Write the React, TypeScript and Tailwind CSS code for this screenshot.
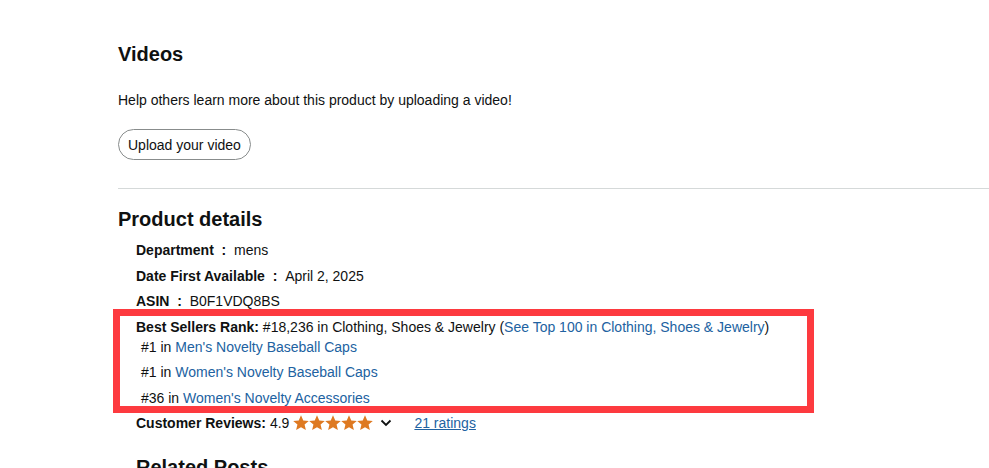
import React from "react";

const FONT = { fontFamily: '"Liberation Sans", Arial, sans-serif' };

function Star() {
  return (
    <svg width="16" height="16" viewBox="1 1.5 22 21" className="inline-block">
      <path
        d="M12 1.5l3.1 7.1 7.6.6-5.8 5 1.8 7.5L12 17.7l-6.7 4 1.8-7.5-5.8-5 7.6-.6z"
        fill="#de7921"
      />
    </svg>
  );
}

function Label({ children }: { children: React.ReactNode }) {
  return <span className="font-bold">{children}</span>;
}

export default function App() {
  const subRanks = [
    { rank: "#1", name: "Men's Novelty Baseball Caps" },
    { rank: "#1", name: "Women's Novelty Baseball Caps" },
    { rank: "#36", name: "Women's Novelty Accessories" },
  ];

  return (
    <div
      className="relative h-[468px] w-[989px] overflow-hidden bg-white text-[#0f1111]"
      style={FONT}
    >
      <div className="pl-[118px] pt-[42px]">
        {/* VIDEOS */}
        <h2 className="text-[20px] font-bold leading-[24px]">Videos</h2>

        <p className="mt-[24px] text-[14px] leading-[20px]">
          Help others learn more about this product by uploading a video!
        </p>

        <button className="mt-[19px] h-[31px] rounded-full border border-[#888c8c] bg-white px-[9px] text-[14px] leading-[20px] text-[#0f1111]">
          Upload your video
        </button>

        <div className="mt-[28px] h-px w-full bg-[#d5d9d9]" />

        {/* PRODUCT DETAILS */}
        <h2 className="mt-[18px] text-[20px] font-bold leading-[24px]">
          Product details
        </h2>

        <ul className="mt-[9px] pl-[18px] text-[14px] leading-[20px]">
          <li className="mb-[5.5px]">
            <Label>Department&nbsp; :&nbsp; </Label>
            <span>mens</span>
          </li>
          <li className="mb-[5.5px]">
            <Label>Date First Available&nbsp; :&nbsp; </Label>
            <span>April 2, 2025</span>
          </li>
          <li className="mb-[5.5px]">
            <Label>ASIN&nbsp; :&nbsp; </Label>
            <span>B0F1VDQ8BS</span>
          </li>
          <li className="mb-[5.5px]">
            <Label>Best Sellers Rank:</Label> #18,236 in Clothing, Shoes &amp;
            Jewelry (
            <a className="text-[#2162a1]">
              See Top 100 in Clothing, Shoes &amp; Jewelry
            </a>
            )
            <ul className="pl-[5px]">
              {subRanks.map((r, i) => (
                <li key={i} className={i > 0 ? "mt-[5.5px]" : ""}>
                  {r.rank} in <a className="text-[#2162a1]">{r.name}</a>
                </li>
              ))}
            </ul>
          </li>
          <li className="flex items-center">
            <Label>Customer Reviews:</Label>
            <span className="ml-[4px]">4.9</span>
            <span className="ml-[4px] flex">
              <Star />
              <Star />
              <Star />
              <Star />
              <Star />
            </span>
            <svg
              width="12"
              height="8"
              viewBox="0 0 12 8"
              className="ml-[7px]"
            >
              <path
                d="M1.5 1.5L6 6l4.5-4.5"
                fill="none"
                stroke="#0f1111"
                strokeWidth="1.8"
              />
            </svg>
            <a className="ml-[22px] text-[#2162a1] underline">21 ratings</a>
          </li>
        </ul>

        <h2 className="mt-[22px] pl-[18px] text-[20px] font-bold leading-[24px]">
          Related Posts
        </h2>
      </div>

      {/* highlight annotation */}
      <div className="absolute left-[113px] top-[309px] h-[104px] w-[701px] border-[7px] border-[#fd3a3f]" />
    </div>
  );
}
